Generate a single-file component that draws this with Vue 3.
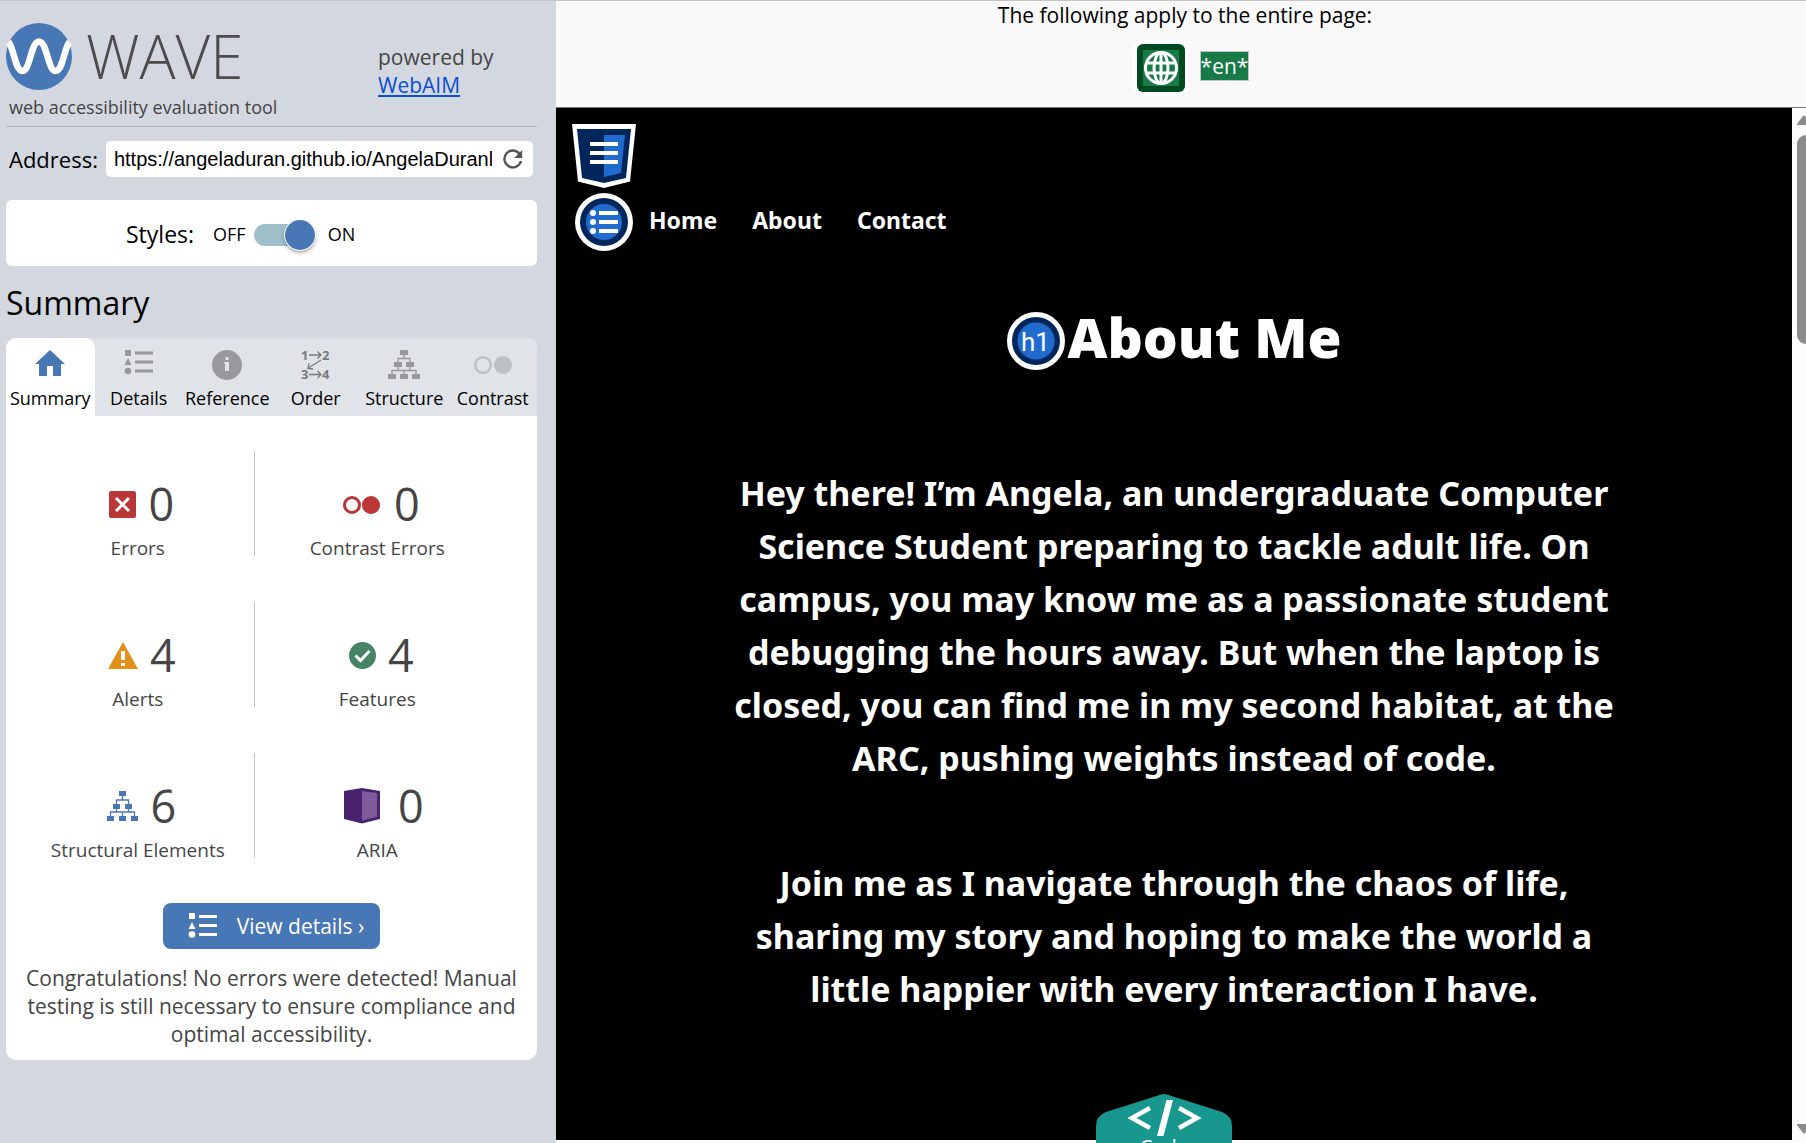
<script setup>
import { ref } from 'vue'

const address = ref('https://angeladuran.github.io/AngelaDuranl')
const stylesOn = ref(true)
const activeTab = ref('Summary')
const tabs = ['Summary', 'Details', 'Reference', 'Order', 'Structure', 'Contrast']

const rows = [
  [
    { id: 'error', count: 0, label: 'Errors' },
    { id: 'contrast', count: 0, label: 'Contrast Errors' }
  ],
  [
    { id: 'alert', count: 4, label: 'Alerts' },
    { id: 'feature', count: 4, label: 'Features' }
  ],
  [
    { id: 'structure', count: 6, label: 'Structural Elements' },
    { id: 'aria', count: 0, label: 'ARIA' }
  ]
]

const intro = [
  'Hey there! I’m Angela, an undergraduate Computer',
  'Science Student preparing to tackle adult life. On',
  'campus, you may know me as a passionate student',
  'debugging the hours away. But when the laptop is',
  'closed, you can find me in my second habitat, at the',
  'ARC, pushing weights instead of code.'
]
const invite = [
  'Join me as I navigate through the chaos of life,',
  'sharing my story and hoping to make the world a',
  'little happier with every interaction I have.'
]
</script>

<template>
  <div class="app">
    <aside class="sidebar">
      <header class="brand">
        <div class="brand-main">
          <h1 class="logo">
            <svg width="66" height="67" viewBox="0 0 66 67" aria-hidden="true">
              <ellipse cx="33" cy="33.500" rx="33" ry="33.500" fill="#4877b6" />
              <path d="M2.500 19C8 25 9 48 16.500 48S25 18.500 33 18.500S42 48 49.500 48S58 25 63.500 19" fill="none" stroke="#fff" stroke-width="6.500" />
            </svg>
            <span>WAVE</span>
          </h1>
          <p class="tagline">web accessibility evaluation tool</p>
        </div>
        <p class="powered">powered by<br /><a href="#webaim">WebAIM</a></p>
      </header>

      <form class="address" @submit.prevent>
        <label for="address">Address:</label>
        <div class="address-box">
          <input id="address" v-model="address" type="text" />
          <button type="submit" aria-label="Reload">
            <svg width="20" height="20" viewBox="0 0 20 20" aria-hidden="true">
              <path d="M16.800 5.200A8.400 8.400 0 1 0 18 12" fill="none" stroke="#555" stroke-width="2.400" />
              <path d="M19.200 1v8h-8z" fill="#555" />
            </svg>
          </button>
        </div>
      </form>

      <section class="styles-box">
        <span class="styles-label">Styles:</span>
        <label class="switch">
          <span>OFF</span>
          <input v-model="stylesOn" type="checkbox" aria-label="Styles" />
          <span>ON</span>
        </label>
      </section>

      <h2 class="title">Summary</h2>

      <section class="panel">
        <nav class="tabs">
          <button
            v-for="tab in tabs"
            :key="tab"
            type="button"
            class="tab"
            :class="{ active: tab === activeTab }"
            @click="activeTab = tab"
          >
            <svg v-if="tab === 'Summary'" width="32" height="32" viewBox="0 0 32 32" aria-hidden="true">
              <path d="M16 2L1 16h4v12h8V18h6v10h8V16h4z" fill="#4877b6" />
            </svg>
            <svg v-else-if="tab === 'Details'" width="32" height="32" viewBox="0 0 32 32" fill="#97999c" aria-hidden="true">
              <path d="M2 2h6v6H2zM5 10l3.500 7h-7zM12 3.500h18v3H12zM12 12.500h18v3H12zM12 21.500h18v3H12z" />
              <circle cx="5" cy="23" r="3.300" />
            </svg>
            <svg v-else-if="tab === 'Reference'" width="32" height="32" viewBox="0 0 32 32" aria-hidden="true">
              <circle cx="16" cy="17" r="15" fill="#97999c" />
              <path d="M14.500 9h3v3h-3zM13 14h5v9h-4v-7.500h-1z" fill="#e0e3e8" />
            </svg>
            <svg v-else-if="tab === 'Order'" class="order-icon" width="32" height="32" viewBox="0 0 32 32" aria-hidden="true">
              <text x="1" y="12">1</text><text x="22" y="12">2</text>
              <text x="1" y="31">3</text><text x="22" y="31">4</text>
              <path d="M9 7h12M17.500 3.500L21 7l-3.500 3.500M9 26.500h12M17.500 23l3.500 3.500l-3.500 3.500M21 12L8.500 20M9 15.500L8 20.500l5 .5" fill="none" stroke="#777a7d" stroke-width="1.300" />
            </svg>
            <svg v-else-if="tab === 'Structure'" width="32" height="32" viewBox="0 0 32 32" aria-hidden="true">
              <path d="M12 2h8v5h-8zM6 14h8v5H6zM18 14h8v5h-8zM0 26h8v5H0zM12 26h8v5h-8zM24 26h8v5h-8z" fill="#97999c" />
              <path d="M16 7v3.500M10 14v-3.500h12V14M10 19v3.500M22 19v3.500M4 26v-3.500h24V26M16 22.500V26" fill="none" stroke="#97999c" stroke-width="1.300" />
            </svg>
            <svg v-else width="38" height="32" viewBox="0 0 38 32" aria-hidden="true">
              <circle cx="9" cy="17" r="7.800" fill="none" stroke="#bdc0c5" stroke-width="2.500" />
              <circle cx="29" cy="17" r="9" fill="#bdc0c5" />
            </svg>
            <span>{{ tab }}</span>
          </button>
        </nav>

        <div class="counts">
          <div v-for="(row, i) in rows" :key="i" class="count-row">
            <div v-for="item in row" :key="item.id" class="count">
              <div class="figure">
                <svg v-if="item.id === 'error'" width="27" height="27" viewBox="0 0 27 27" aria-hidden="true">
                  <rect width="27" height="27" rx="2" fill="#bb3637" />
                  <path d="M7 7l13 13M20 7L7 20" stroke="#fff" stroke-width="3" />
                </svg>
                <svg v-else-if="item.id === 'contrast'" width="39" height="27" viewBox="0 0 39 27" aria-hidden="true">
                  <circle cx="9" cy="14" r="7.500" fill="none" stroke="#bb3637" stroke-width="3" />
                  <circle cx="28" cy="14" r="9" fill="#bb3637" />
                </svg>
                <svg v-else-if="item.id === 'alert'" width="30" height="27" viewBox="0 0 30 27" aria-hidden="true">
                  <path d="M15 0l15 27H0z" fill="#e48f18" />
                  <path d="M13 9h4v9h-4zM13 21h4v3h-4z" fill="#fff" />
                </svg>
                <svg v-else-if="item.id === 'feature'" width="27" height="27" viewBox="0 0 27 27" aria-hidden="true">
                  <circle cx="13.500" cy="13.500" r="13.500" fill="#478365" />
                  <path d="M6.500 13.500l5 5L20.500 9" fill="none" stroke="#fff" stroke-width="3" />
                </svg>
                <svg v-else-if="item.id === 'structure'" width="31" height="30" viewBox="0 0 31 30" aria-hidden="true">
                  <path d="M12 0h7v5h-7zM6 13h7v5H6zM18 13h7v5h-7zM0 25h7v5H0zM12 25h7v5h-7zM24 25h7v5h-7z" fill="#4877b6" />
                  <path d="M15.500 5v4M9.500 13V9h12v4M9.500 18v3M21.500 18v3M3.500 25v-4h24v4M15.500 21v4" fill="none" stroke="#4877b6" stroke-width="1.300" />
                </svg>
                <svg v-else width="47" height="36" viewBox="-2 0 47 36" aria-hidden="true">
                  <path d="M3 3l18-3l18 3v28l-18 4.500L3 31z" fill="#48226c" />
                  <path d="M21 3l15 2v24l-15 3.500z" fill="#7f5a9b" />
                </svg>
                <strong>{{ item.count }}</strong>
              </div>
              <span class="count-label">{{ item.label }}</span>
            </div>
          </div>
        </div>

        <button type="button" class="details">
          <svg width="32" height="28" viewBox="0 0 32 28" fill="#fff" aria-hidden="true">
            <path d="M2 1h6v6H2zM5 10l3.500 7h-7zM12 3h18v3H12zM12 12h18v3H12zM12 21h18v3H12z" />
            <circle cx="5" cy="22.500" r="3.300" />
          </svg>
          <span>View details ›</span>
        </button>
        <p class="message">Congratulations! No errors were detected! Manual testing is still necessary to ensure compliance and optimal accessibility.</p>
      </section>
    </aside>

    <main class="main">
      <div class="page-info">
        <p>The following apply to the entire page:</p>
        <div class="page-flags">
          <svg width="56" height="56" viewBox="0 0 56 56" role="img" aria-label="Language">
            <rect width="56" height="56" rx="10" fill="#fff" />
            <rect x="4" y="4" width="48" height="48" rx="6" fill="#004a22" />
            <rect x="10" y="10" width="36" height="36" fill="#187a47" />
            <g fill="none" stroke="#fff" stroke-width="3">
              <circle cx="28" cy="28" r="15.500" />
              <ellipse cx="28" cy="28" rx="7" ry="15.500" />
              <path d="M28 12v32M14 23h28M14 33h28" />
            </g>
          </svg>
          <span class="lang">*en*</span>
        </div>
      </div>

      <div class="viewport">
        <article class="site">
          <svg class="shield" width="64" height="64" viewBox="0 0 64 64" aria-hidden="true">
            <path d="M0 0h64l-6 57.500l-26 6.500l-26-6.500z" fill="#fff" />
            <path d="M5 5h54l-5 49l-22 5l-22-5z" fill="#00265b" />
            <path d="M32 11h21l-4 38l-17 4z" fill="#226bce" />
            <path d="M18 18h28v4H18zM18 27h28v4H18zM18 36h28v4H18z" fill="#fff" />
          </svg>
          <nav class="site-nav">
            <svg width="58" height="58" viewBox="0 0 58 58" aria-hidden="true">
              <circle cx="29" cy="29" r="29" fill="#fff" />
              <circle cx="29" cy="29" r="24" fill="#00265b" />
              <circle cx="29" cy="29" r="18" fill="#226bce" />
              <g fill="#fff">
                <circle cx="18" cy="20" r="3" /><circle cx="18" cy="29" r="3" /><circle cx="18" cy="38" r="3" />
                <path d="M24 18h19v4H24zM24 27h19v4H24zM24 36h19v4H24z" />
              </g>
            </svg>
            <a href="#home">Home</a>
            <a href="#about">About</a>
            <a href="#contact">Contact</a>
          </nav>
          <h2 class="site-title">
            <span class="h1-badge">h1</span>
            <span class="site-title-text">About Me</span>
          </h2>
          <p class="copy"><span v-for="line in intro" :key="line">{{ line }}</span></p>
          <p class="copy"><span v-for="line in invite" :key="line">{{ line }}</span></p>
          <button type="button" class="code-tab">
            <svg width="136" height="74" viewBox="0 0 136 74" aria-hidden="true">
              <path d="M62 1.500q6-3 12 0L126 18q10 4 10 14v42H0V32Q0 22 10 18z" fill="#18978f" />
              <path d="M54 14L36 24l18 10M83 14l18 10l-18 10" fill="none" stroke="#fff" stroke-width="4.500" />
              <path d="M70.500 6h6.500L67.500 42H61z" fill="#fff" />
            </svg>
            <span>Code</span>
          </button>
        </article>
        <div class="scrollbar" aria-hidden="true">
          <svg width="14" height="10" viewBox="0 0 14 10"><path d="M0 9L6 1q1-1 2 0l6 8v1H0z" fill="#8b8b8b" /></svg>
          <div class="thumb"></div>
          <svg class="down" width="14" height="10" viewBox="0 0 14 10"><path d="M0 1L6 9q1 1 2 0l6-8V0H0z" fill="#8b8b8b" /></svg>
        </div>
      </div>
    </main>
  </div>
</template>

<style>
body {
  margin: 0;
  overflow: hidden;
}
</style>

<style scoped>
* {
  box-sizing: border-box;
}
h1, h2, p {
  margin: 0;
  font-weight: 400;
}
button, input {
  font-family: inherit;
  color: inherit;
  border: 0;
  background: none;
  padding: 0;
}
svg {
  display: block;
  flex: none;
}
.app {
  display: flex;
  height: 100vh;
  overflow: hidden;
  border-top: 1px solid #c4c4c4;
  font-family: "Open Sans", sans-serif;
  color: #000;
}

.sidebar {
  flex: 0 0 556px;
  padding: 16px 19px 0 6px;
  background: #d3d8e0;
}
.brand {
  display: flex;
  height: 110px;
  border-bottom: 1px solid #b2b6bb;
  color: #454545;
}
.brand-main {
  flex: 0 0 372px;
}
.logo {
  display: flex;
  align-items: center;
  gap: 14px;
  height: 78px;
  font-size: 60px;
  font-weight: 300;
  line-height: 80px;
  color: #4c4c4c;
}
.tagline {
  padding-left: 3px;
  font-size: 18px;
  line-height: 24px;
}
.powered {
  padding-top: 26px;
  font-size: 21px;
  line-height: 28px;
}
.powered a {
  color: #0a50cf;
}
.address {
  display: flex;
  align-items: center;
  gap: 8px;
  margin-top: 14px;
  padding: 0 4px 0 3px;
  font-size: 22px;
}
.address label {
  line-height: 32px;
}
.address-box {
  display: flex;
  flex: 1;
  align-items: center;
  height: 36px;
  padding: 0 10px 0 8px;
  border-radius: 5px;
  background: #fff;
}
.address-box input {
  flex: 1;
  min-width: 0;
  margin-right: 11px;
  font-family: "Liberation Sans", sans-serif;
  font-size: 20px;
  line-height: 32px;
  outline: 0;
}
.styles-box {
  display: flex;
  align-items: center;
  height: 66px;
  margin-top: 23px;
  padding: 2px 0 0 120px;
  border-radius: 6px;
  background: #fff;
  font-size: 23px;
}
.switch {
  display: flex;
  align-items: center;
  margin-left: 19px;
  font-size: 18px;
}
.switch input {
  display: flex;
  align-items: center;
  justify-content: flex-start;
  appearance: none;
  width: 61px;
  height: 22px;
  margin: 2px 13px 0 8px;
  border-radius: 11px;
  background: #9fc0ca;
}
.switch input:checked {
  justify-content: flex-end;
}
.switch input::before {
  content: "";
  width: 30px;
  height: 30px;
  border-radius: 50%;
  background: #4877b6;
  box-shadow: 0 0 0 1px #fff, 0 2px 4px rgba(0, 0, 0, 0.5);
}
.title {
  margin: 16px 0 15px;
  font-size: 32px;
  line-height: 41px;
}

.panel {
  display: flex;
  flex-direction: column;
  align-items: center;
  padding-bottom: 12px;
  border-radius: 10px;
  background: #fff;
  overflow: hidden;
  color: #454545;
}
.tabs {
  display: flex;
  align-self: stretch;
  background: #e0e3e8;
  color: #000;
}
.tab {
  display: flex;
  flex: 1 1 0;
  flex-direction: column;
  align-items: center;
  height: 78px;
  min-width: 0;
  padding-top: 10px;
  font-size: 18px;
  line-height: 24px;
}
.tab span {
  margin-top: 6px;
}
.tab.active {
  border-radius: 10px 10px 0 0;
  background: #fff;
}
.order-icon {
  overflow: visible;
}
.order-icon text {
  font-size: 13px;
  font-weight: 700;
  fill: #777a7d;
}
.counts {
  display: flex;
  flex-direction: column;
  gap: 46px;
  align-self: stretch;
  padding: 35px 37px 0 16px;
}
.count-row {
  display: flex;
}
.count {
  display: flex;
  flex: 1 1 246px;
  flex-direction: column;
  align-items: center;
  height: 105px;
  padding-top: 26px;
}
.count:first-child {
  flex: 1 1 233px;
  border-right: 1px solid #c2c2c2;
}
.figure {
  display: flex;
  align-items: center;
  gap: 12px;
  height: 54px;
  padding-left: 8px;
}
.figure strong {
  font-size: 45px;
  font-weight: 400;
  line-height: 54px;
}
.count-label {
  margin-top: 4px;
  font-size: 19px;
  line-height: 26px;
}
.details {
  display: flex;
  align-items: center;
  gap: 18px;
  height: 46px;
  margin-top: 45px;
  padding: 0 16px 0 24px;
  border-radius: 8px;
  background: #4877b6;
  color: #fff;
  font-size: 21px;
}
.message {
  margin-top: 15px;
  padding: 0 16px;
  font-size: 21px;
  line-height: 28px;
  text-align: center;
}

.main {
  display: flex;
  flex: 1;
  flex-direction: column;
  min-width: 0;
  background: #fcfcfc;
}
.page-info {
  height: 107px;
  padding-left: 8px;
  border-bottom: 1px solid #777;
  background: #f9f9f9;
  font-size: 21px;
  line-height: 28px;
  text-align: center;
}
.page-flags {
  display: flex;
  align-items: flex-start;
  justify-content: center;
  gap: 11px;
  padding: 11px 0 0 12px;
}
.lang {
  margin-top: 11px;
  border: 1px solid #c4c4c4;
  background: #187a47;
  color: #fff;
  line-height: 28px;
}
.viewport {
  display: flex;
  flex: 1;
  min-height: 0;
  padding-bottom: 3px;
}
.site {
  display: flex;
  flex: 1;
  flex-direction: column;
  align-items: center;
  min-height: 0;
  padding-top: 16px;
  background: #000;
  color: #fff;
  font-family: "Noto Sans", sans-serif;
}
.shield {
  align-self: flex-start;
  margin-left: 16px;
}
.site-nav {
  display: flex;
  align-items: center;
  align-self: flex-start;
  gap: 35px;
  margin: 5px 0 0 19px;
  font-size: 23px;
  font-weight: 700;
}
.site-nav svg {
  margin-right: -19px;
}
.site-nav a {
  padding-bottom: 4px;
  color: #fff;
  text-decoration: none;
}
.site-title {
  display: flex;
  align-items: center;
  gap: 3px;
  height: 80px;
  margin: 50px 0 51px;
  font-size: 55px;
  font-weight: 900;
  line-height: 80px;
}
.site-title-text {
  padding-bottom: 8px;
}
.h1-badge {
  width: 58px;
  height: 58px;
  border: 5px solid #fff;
  border-radius: 50%;
  background: radial-gradient(circle, #226bce 18px, #00265b 19px);
  font-family: Roboto, sans-serif;
  font-size: 26px;
  font-weight: 400;
  line-height: 50px;
  text-align: center;
}
.copy {
  margin-top: 35px;
  font-size: 34px;
  font-weight: 700;
  line-height: 53px;
  text-align: center;
}
.copy + .copy {
  margin-top: 72px;
}
.copy span {
  display: block;
  white-space: nowrap;
}
.code-tab {
  display: grid;
  flex: none;
  margin: 78px 0 0 -20px;
  color: #fff;
  font-size: 20px;
  line-height: 24px;
}
.code-tab > * {
  grid-area: 1 / 1;
}
.code-tab span {
  margin-top: 41px;
}
.scrollbar {
  display: flex;
  flex: 0 0 14px;
  flex-direction: column;
  min-width: 0;
  padding: 7px 0 6px 5px;
}
.thumb {
  width: 18px;
  height: 209px;
  margin: 10px 0 auto;
  border-radius: 9px;
  background: #8b8b8b;
}
</style>
